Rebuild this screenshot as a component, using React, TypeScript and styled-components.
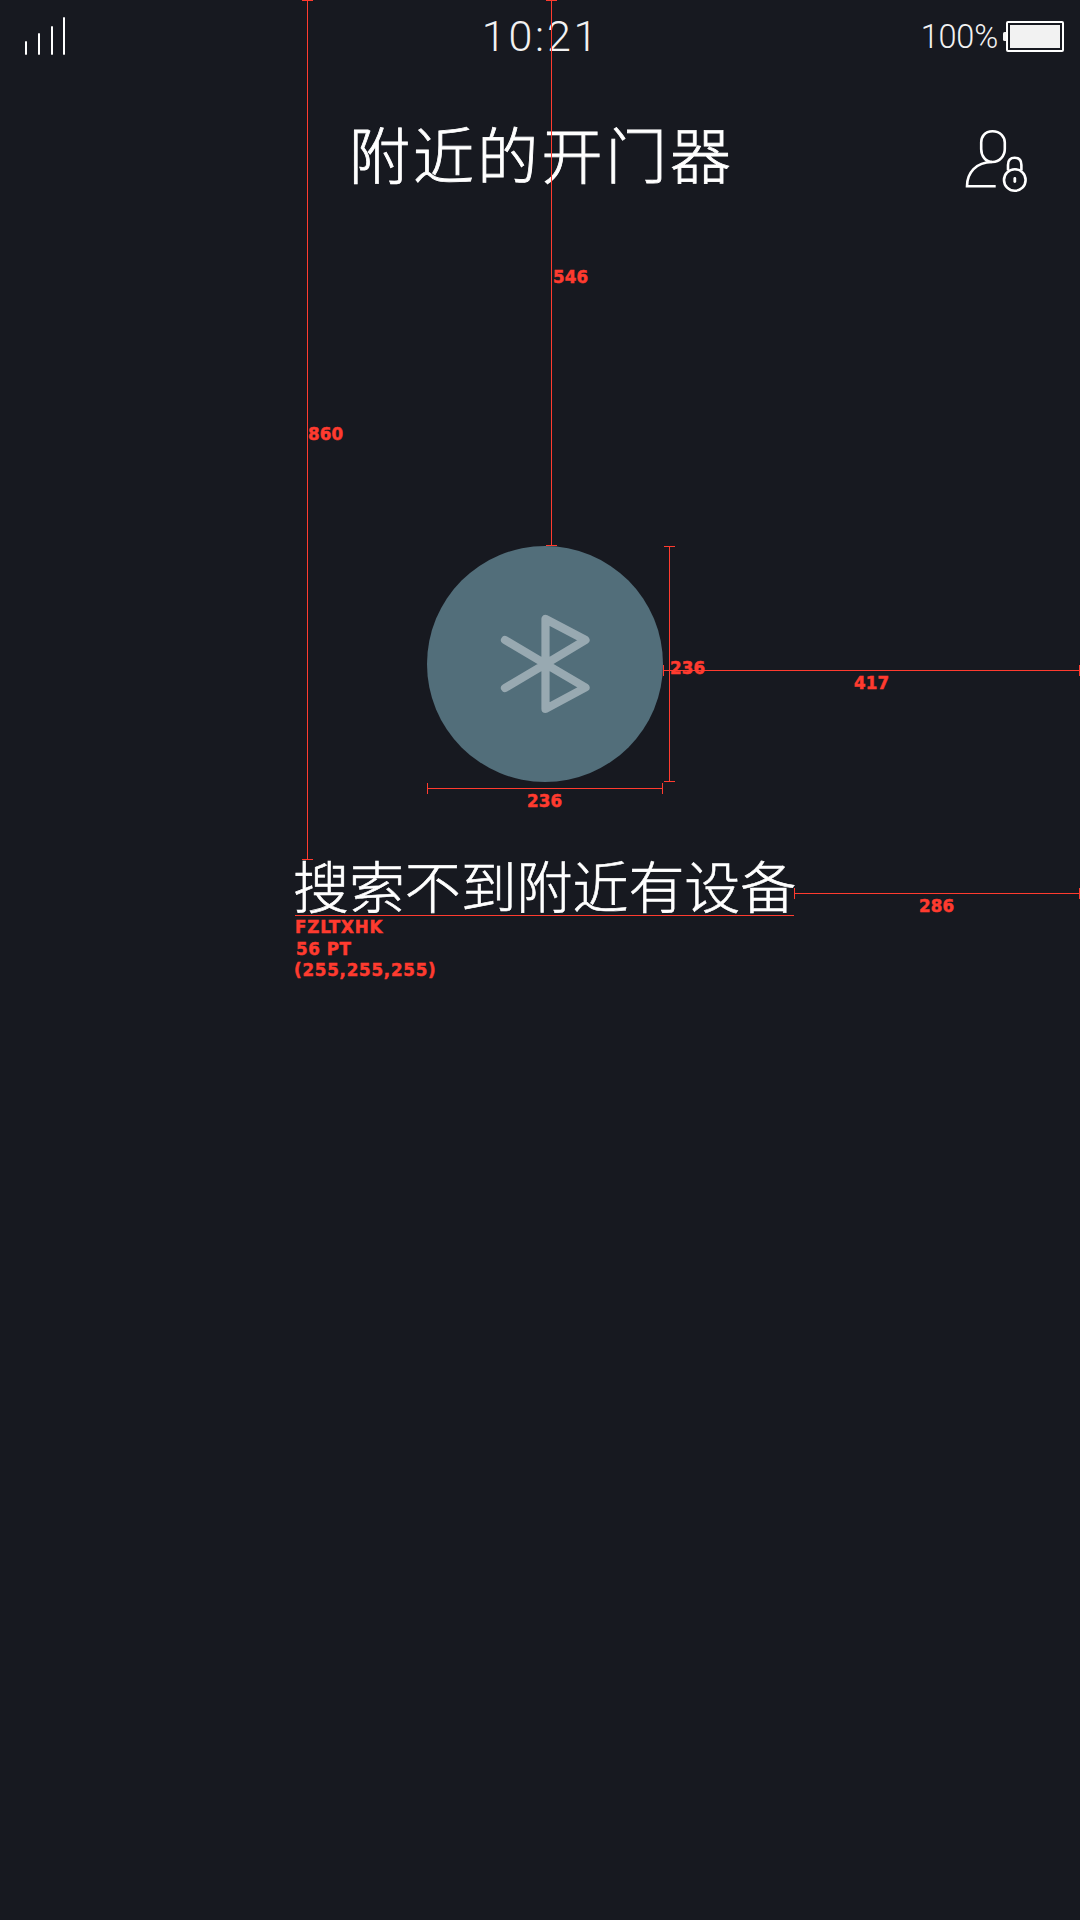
import React from "react";
import styled, { createGlobalStyle } from "styled-components";

const RED = "#ff3b2f";

const GlobalStyle = createGlobalStyle`
  * { box-sizing: border-box; }
  body { margin: 0; background: #171920; }
`;

const Screen = styled.main`
  position: relative;
  width: 1080px;
  height: 1920px;
  overflow: hidden;
  display: flex;
  flex-direction: column;
  background: #171920;
  color: #fff;
  font-family: Roboto, "Noto Sans CJK SC", sans-serif;
`;

const StatusBar = styled.header`
  display: grid;
  grid-template-columns: 1fr auto 1fr;
  height: 72px;
  padding: 0 16px 0 25px;
`;

const Signal = styled.svg`
  display: block;
  width: 42px;
  height: 72px;
`;

const Clock = styled.time`
  padding-top: 11px;
  padding-right: 7px;
  font-size: 43px;
  font-weight: 300;
  line-height: 50px;
  letter-spacing: 2.8px;
  color: #f2f2f2;
`;

const Power = styled.div`
  display: flex;
  justify-content: flex-end;
`;

const Percent = styled.span`
  padding-top: 17px;
  margin-right: 5px;
  font-size: 32.5px;
  font-weight: 300;
  line-height: 40px;
  letter-spacing: -0.2px;
  color: #f2f2f2;
`;

const Battery = styled.svg`
  display: block;
  width: 61px;
  height: 72px;
`;

const TitleBar = styled.div`
  display: grid;
  grid-template-columns: 1fr auto 1fr;
  height: 144px;
  padding: 0 50px;
`;

const Title = styled.h1`
  grid-column: 2;
  margin: 0;
  padding: 37px 0 0 3px;
  font-family: "Noto Sans CJK SC", sans-serif;
  font-size: 61px;
  font-weight: 300;
  line-height: 88px;
  letter-spacing: 3.2px;
  -webkit-text-stroke: 0.8px #fff;
`;

const UserButton = styled.button`
  justify-self: end;
  width: 66px;
  height: 66px;
  margin-top: 56px;
  padding: 0;
  border: 0;
  background: none;
  color: #fff;

  svg { display: block; }
`;

const Content = styled.section`
  display: flex;
  flex-direction: column;
  align-items: flex-start;
  padding-top: 330px;
`;

const BluetoothDisc = styled.div`
  display: flex;
  width: 236px;
  height: 236px;
  margin-left: 427px;
  border-radius: 50%;
  background: #526e7a;
`;

const Message = styled.p`
  margin: 61px 0 0 293px;
  font-family: "Noto Sans CJK SC", sans-serif;
  font-size: 56px;
  font-weight: 300;
  line-height: 82px;
  letter-spacing: -0.1px;
  white-space: nowrap;
  -webkit-text-stroke: 0.6px #fff;
`;

const Overlay = styled.div`
  position: absolute;
  inset: 0;
  pointer-events: none;
`;

const Rule = styled.i<{ $x: number; $y: number; $len: number; $vertical?: boolean; $plain?: boolean }>`
  position: absolute;
  left: ${(p) => p.$x - (p.$vertical ? 5 : 0)}px;
  top: ${(p) => p.$y - (p.$vertical ? 0 : 5)}px;
  width: ${(p) => (p.$vertical ? 11 : p.$len)}px;
  height: ${(p) => (p.$vertical ? p.$len : 11)}px;
  border: 0 solid ${RED};
  border-width: ${(p) => (p.$plain ? "0" : p.$vertical ? "1px 0" : "0 1px")};

  &::before {
    content: "";
    position: absolute;
    left: ${(p) => (p.$vertical ? 5 : 0)}px;
    top: ${(p) => (p.$vertical ? 0 : 5)}px;
    width: ${(p) => (p.$vertical ? "1px" : "100%")};
    height: ${(p) => (p.$vertical ? "100%" : "1px")};
    background: ${RED};
  }
`;

const Label = styled.span<{ $x: number; $y: number; $gap?: number }>`
  position: absolute;
  left: ${(p) => p.$x}px;
  top: ${(p) => p.$y}px;
  font-family: "DejaVu Sans Condensed", "DejaVu Sans", sans-serif;
  font-stretch: condensed;
  font-size: 18.5px;
  font-weight: 700;
  line-height: 15px;
  letter-spacing: ${(p) => p.$gap ?? 0.2}px;
  white-space: nowrap;
  color: ${RED};
  -webkit-text-stroke: 0.5px ${RED};
`;

const rules = [
  { x: 307, y: 0, len: 860, vertical: true },
  { x: 551, y: 0, len: 546, vertical: true },
  { x: 669, y: 546, len: 236, vertical: true },
  { x: 427, y: 788, len: 236 },
  { x: 663, y: 670, len: 417 },
  { x: 794, y: 893, len: 286 },
  { x: 295, y: 915, len: 499, plain: true },
];

const labels = [
  { x: 553, y: 269, text: "546" },
  { x: 308, y: 426, text: "860" },
  { x: 670, y: 660, text: "236" },
  { x: 527, y: 793, text: "236" },
  { x: 854, y: 675, text: "417" },
  { x: 919, y: 898, text: "286" },
  { x: 295, y: 919, text: "FZLTXHK", gap: 0.9 },
  { x: 296, y: 941, text: "56 PT", gap: 0.6 },
  { x: 294, y: 962, text: "(255,255,255)", gap: 0.8 },
];

export default function App() {
  return (
    <>
      <GlobalStyle />
      <Screen>
        <StatusBar>
          <Signal viewBox="0 0 42 72" fill="#fff">
            <rect x="0" y="41.3" width="2" height="13.4" />
            <rect x="13" y="33.3" width="2" height="21.4" />
            <rect x="26" y="26.3" width="2" height="28.4" />
            <rect x="38" y="17.3" width="2" height="37.4" />
          </Signal>
          <Clock>10:21</Clock>
          <Power>
            <Percent>100%</Percent>
            <Battery viewBox="0 0 61 72">
              <path d="M4 32H1.5Q0 32 0 33.5V39.500Q0 41 1.500 41H4Z" fill="#f2f2f2" />
              <rect x="4" y="22" width="56" height="29" rx="1" fill="none" stroke="#fff" strokeWidth="2" />
              <rect x="7" y="25" width="50" height="23" fill="#f2f2f2" />
            </Battery>
          </Power>
        </StatusBar>
        <TitleBar>
          <Title>附近的开门器</Title>
          <UserButton aria-label="用户">
            <svg width="66" height="66" viewBox="0 0 66 66" fill="none" stroke="currentColor" strokeWidth="2.6">
              <path d="M28.500 3.200C20.500 3.200 17.200 9 17.200 14.500V21C17.200 28 21.500 34 28.500 34S40.800 28 40.800 21V14.500C40.800 9 36.500 3.200 28.500 3.200Z" />
              <path d="M28 34C12 34 3 45 3 58.200H31.700" />
              <path d="M44 42.500V37C44 32.500 46.500 29.800 50.700 29.800S57.400 32.500 57.400 37V42.500" />
              <circle cx="50.800" cy="52" r="10.800" />
              <path d="M50.800 50.500V53.500" strokeWidth="2.800" strokeLinecap="round" />
            </svg>
          </UserButton>
        </TitleBar>
        <Content>
          <BluetoothDisc>
            <svg width="236" height="236" viewBox="0 0 236 236" fill="none" stroke="#98a9b1" strokeWidth="8.200" strokeLinecap="round" strokeLinejoin="round">
              <path d="M78 94L118.500 118L158.500 94L118.500 73V163L158.500 141.500L118.500 118L78 142" />
            </svg>
          </BluetoothDisc>
          <Message>搜索不到附近有设备</Message>
        </Content>
        <Overlay>
          {rules.map((r, i) => (
            <Rule key={i} $x={r.x} $y={r.y} $len={r.len} $vertical={r.vertical} $plain={r.plain} />
          ))}
          {labels.map((l, i) => (
            <Label key={i} $x={l.x} $y={l.y} $gap={l.gap}>{l.text}</Label>
          ))}
        </Overlay>
      </Screen>
    </>
  );
}
